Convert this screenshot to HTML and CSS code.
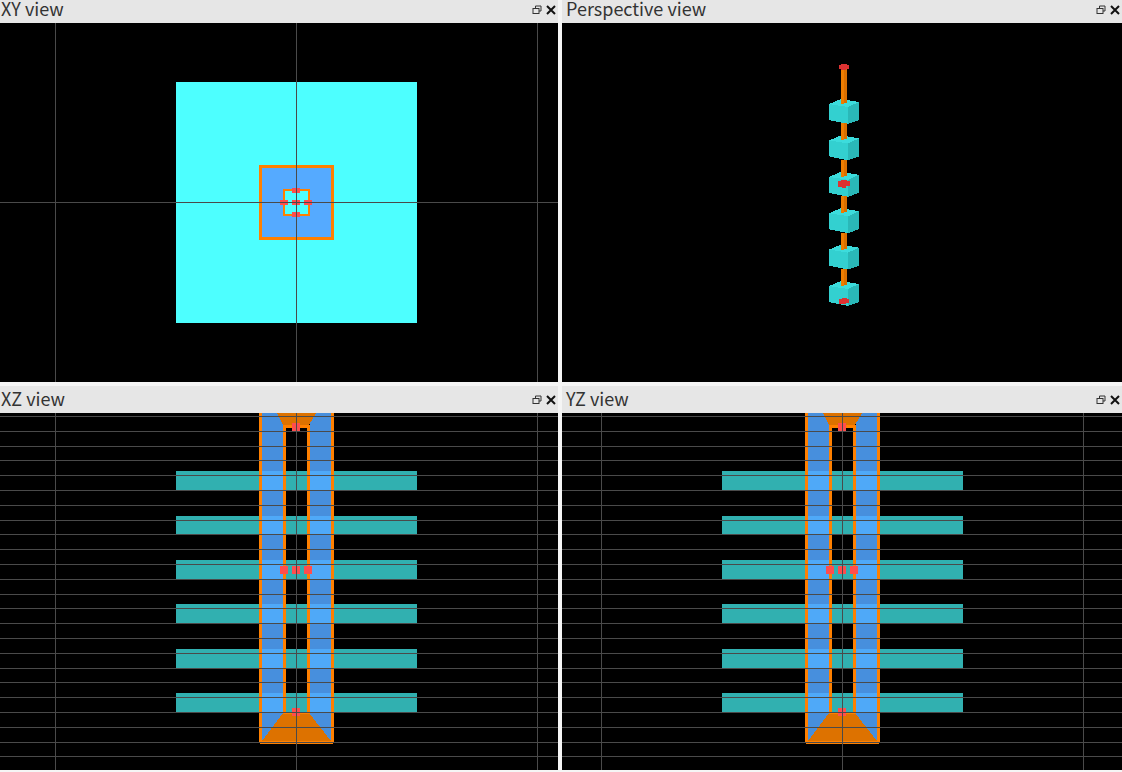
FILE: index.html
```html
<!DOCTYPE html>
<html lang="en">
<head>
    <meta charset="UTF-8">
    <meta name="viewport" content="width=device-width, initial-scale=1.0">
    <title>Viewports</title>
    <link rel="stylesheet" href="styles.css">
</head>
<body>
    <svg class="defs" width="0" height="0" aria-hidden="true">
        <defs>
            <symbol id="icon-restore" viewBox="0 0 10 10">
                <path class="icon-line" d="M3.5 3V1H9V6H7"/>
                <rect class="icon-line" x="1" y="3.5" width="6" height="5"/>
            </symbol>
            <symbol id="icon-close" viewBox="0 0 10 10">
                <path class="icon-cross" d="M1 1L9 9M9 1L1 9"/>
            </symbol>

            <!-- one cube of the perspective stack and the rod that ends on it -->
            <g id="cube">
                <polygon class="cube-top" points="829,104 841,99 859,102 848,107"/>
                <polygon class="cube-left" points="829,104 848,107 848,124 829,120"/>
                <polygon class="cube-right" points="848,107 859,102 859,120 848,124"/>
                <rect class="rod-light" x="841" y="87" width="3" height="17"/>
                <rect class="rod-dark" x="844" y="87" width="3" height="16"/>
            </g>

            <g id="band">
                <rect class="band" x="176" y="471" width="241" height="19"/>
                <rect class="band-over" x="262" y="471" width="21" height="19"/>
                <rect class="band-over" x="310" y="471" width="21" height="19"/>
            </g>

            <!-- XZ and YZ show the same section, only the offset differs -->
            <g id="side-scene">
                <rect class="column" x="262" y="413" width="21" height="328"/>
                <rect class="column" x="310" y="413" width="21" height="328"/>
                <use href="#band"/>
                <use href="#band" y="45"/>
                <use href="#band" y="89"/>
                <use href="#band" y="133"/>
                <use href="#band" y="178"/>
                <use href="#band" y="222"/>
                <polygon class="cone" points="277,413 316,413 309,425 283,425"/>
                <polygon class="cone" points="262,741 283,713 309,713 331,741"/>
                <rect class="edge" x="284" y="425" width="24" height="3"/>
                <rect class="edge" x="286" y="712" width="21" height="2"/>
                <rect class="edge" x="259" y="413" width="3" height="329"/>
                <rect class="edge" x="283" y="425" width="3" height="289"/>
                <rect class="edge" x="307" y="425" width="3" height="289"/>
                <rect class="edge" x="331" y="413" width="3" height="329"/>
                <rect class="edge" x="259" y="741" width="75" height="1"/>
                <rect class="edge" x="260" y="743" width="73" height="1"/>
                <rect class="node" x="292" y="423" width="8" height="8"/>
                <rect class="node" x="280" y="566" width="8" height="8"/>
                <rect class="node" x="292" y="566" width="8" height="8"/>
                <rect class="node" x="304" y="566" width="8" height="8"/>
                <rect class="node" x="292" y="708" width="8" height="8"/>
                <path class="grid" d="M55.5 413V770M296.5 413V770M537.5 413V770
                    M0 416.5H576M0 431.5H576M0 446.5H576M0 460.5H576M0 475.5H576M0 490.5H576
                    M0 505.5H576M0 520.5H576M0 534.5H576M0 549.5H576M0 564.5H576M0 579.5H576
                    M0 594.5H576M0 608.5H576M0 623.5H576M0 638.5H576M0 653.5H576M0 668.5H576
                    M0 682.5H576M0 697.5H576M0 712.5H576M0 727.5H576M0 742.5H576M0 756.5H576"/>
            </g>
        </defs>
    </svg>

    <div class="workspace">
        <section class="panel">
            <header class="title-bar title-bar-cut">
                <span class="title">XY view</span>
                <svg class="btn-restore"><use href="#icon-restore"/></svg>
                <svg class="btn-close"><use href="#icon-close"/></svg>
            </header>
            <svg class="viewport" viewBox="0 23 558 359">
                <rect class="plate" x="176" y="82" width="241" height="241"/>
                <rect class="core-outer" x="260.5" y="166.5" width="72" height="72"/>
                <rect class="core-inner" x="284" y="190" width="25" height="25"/>
                <rect class="node" x="292" y="188" width="8" height="5"/>
                <rect class="node" x="280" y="200" width="8" height="5"/>
                <rect class="node" x="292" y="200" width="8" height="5"/>
                <rect class="node" x="304" y="200" width="8" height="5"/>
                <rect class="node" x="292" y="212" width="8" height="5"/>
                <path class="grid" d="M55.5 23V382M296.5 23V382M537.5 23V382M0 202.5H558"/>
            </svg>
        </section>

        <section class="panel panel-right">
            <header class="title-bar title-bar-cut">
                <span class="title">Perspective view</span>
                <svg class="btn-restore"><use href="#icon-restore"/></svg>
                <svg class="btn-close"><use href="#icon-close"/></svg>
            </header>
            <svg class="viewport" viewBox="562 23 560 359">
                <rect class="rod-light" x="841" y="68" width="3" height="20"/>
                <rect class="rod-dark" x="844" y="68" width="3" height="20"/>
                <polygon class="cap" points="839,65 841,65 841,64 847,64 847,65 849,65 849,69 846,69 846,70 841,70 841,69 839,69"/>
                <use href="#cube"/>
                <use href="#cube" y="36.4"/>
                <use href="#cube" y="72.8"/>
                <use href="#cube" y="109.2"/>
                <use href="#cube" y="145.6"/>
                <use href="#cube" y="182"/>
                <polygon class="cap" points="838,181 841,181 841,180 847,180 847,181 850,181 850,186 846,186 846,188 842,188 842,187 838,187"/>
                <polygon class="cap" points="839,299 842,299 842,298 847,298 847,299 849,299 849,303 846,303 846,304 839,304"/>
            </svg>
        </section>

        <section class="panel">
            <header class="title-bar">
                <span class="title">XZ view</span>
                <svg class="btn-restore"><use href="#icon-restore"/></svg>
                <svg class="btn-close"><use href="#icon-close"/></svg>
            </header>
            <svg class="viewport" viewBox="0 413 558 357"><use href="#side-scene"/></svg>
        </section>

        <section class="panel panel-right">
            <header class="title-bar">
                <span class="title">YZ view</span>
                <svg class="btn-restore"><use href="#icon-restore"/></svg>
                <svg class="btn-close"><use href="#icon-close"/></svg>
            </header>
            <svg class="viewport" viewBox="16 413 560 357"><use href="#side-scene"/></svg>
        </section>
    </div>
</body>
</html>
```

FILE: styles.css
```css
* {
    margin: 0;
    padding: 0;
    box-sizing: border-box;
}

html, body {
    height: 100%;
    overflow: hidden;
}

body {
    background-color: #f5f5f5;
    font-family: "Noto Sans CJK JP", "Noto Sans", sans-serif;
    color: #333;
}

.defs {
    display: block;
    height: 0;
}

.workspace {
    display: grid;
    grid-template-columns: 558px 560px;
    grid-template-rows: 382px 384px;
    gap: 4px;
}

.panel {
    display: flex;
    flex-direction: column;
    min-height: 0;
}

.title-bar {
    display: flex;
    align-items: center;
    flex: 0 0 27px;
    padding: 0 2px 2px 1px;
    background-color: #e6e6e6;
}

.title-bar-cut {
    flex-basis: 23px;
    padding-bottom: 6px;
}

.panel-right .title-bar {
    padding-left: 4px;
}

.title {
    flex: 1;
    font-size: 18px;
    line-height: 17px;
    white-space: nowrap;
}

.btn-restore,
.btn-close {
    width: 10px;
    height: 10px;
    margin-top: 2px;
}

.btn-restore {
    margin-right: 4px;
}

.viewport {
    display: block;
    flex: 1;
    width: 100%;
    min-height: 0;
    background-color: #000;
    shape-rendering: crispEdges;
}

.icon-line {
    fill: none;
    stroke: #333;
    stroke-width: 1;
}

.icon-cross {
    fill: none;
    stroke: #111;
    stroke-width: 2;
}

.grid {
    fill: none;
    stroke: #4a4a4a;
    stroke-width: 1;
}

.plate { fill: #4dffff; }
.core-outer { fill: #55aaff; stroke: #ff8000; stroke-width: 3; }
.core-inner { fill: #4dffff; stroke: #ff8000; stroke-width: 2; }
.node { fill: #ff4d4d; }

.band { fill: #31b0b0; }
.band-over { fill: #4fa9f8; }
.column { fill: #478fdd; }
.cone { fill: #dd7200; }
.edge { fill: #ff8000; }

.cube-top { fill: #3cdcdc; }
.cube-left { fill: #33d0d0; }
.cube-right { fill: #2ab8b8; }
.rod-light { fill: #ee7d00; }
.rod-dark { fill: #d96f00; }
.cap { fill: #dc3232; }
```
